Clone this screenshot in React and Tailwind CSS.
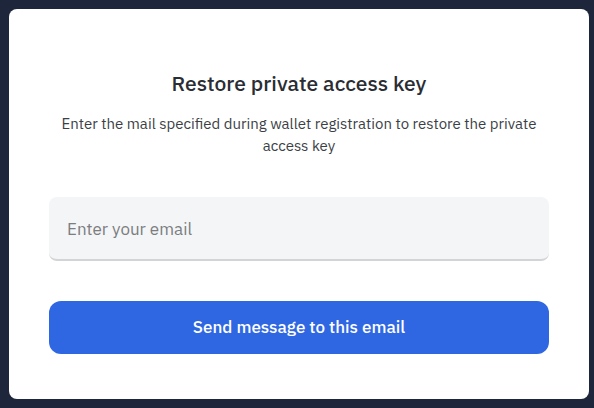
export default function App() {
  return (
    <div className="min-h-screen bg-[#1e263b] pt-[9px] pr-[5px] pb-[9px] pl-[9px] font-['IBM_Plex_Sans','Roboto',sans-serif] text-[#2a2d33]">
      <main className="rounded-lg bg-white px-10 pt-[60px] pb-[45px]">
        <h1 className="text-center text-[21px] leading-7 font-medium">Restore private access key</h1>
        <p className="mt-4 text-center text-[15px] leading-[22px] font-normal text-[#3c3f46]">
          Enter the mail specified during wallet registration to restore the private access key
        </p>
        <form className="mt-10 flex flex-col gap-10" onSubmit={(e) => e.preventDefault()}>
          <input
            type="email"
            aria-label="Email"
            placeholder="Enter your email"
            className="h-16 w-full rounded-lg border-b-2 border-[#d3d4d6] bg-[#f4f5f7] px-[18px] pt-0.5 text-[17px] outline-none placeholder:text-[#7b7d80]"
          />
          <button type="submit" className="h-[53px] w-full rounded-xl bg-[#2f67e3] text-[17px] font-medium text-white">
            Send message to this email
          </button>
        </form>
      </main>
    </div>
  );
}
